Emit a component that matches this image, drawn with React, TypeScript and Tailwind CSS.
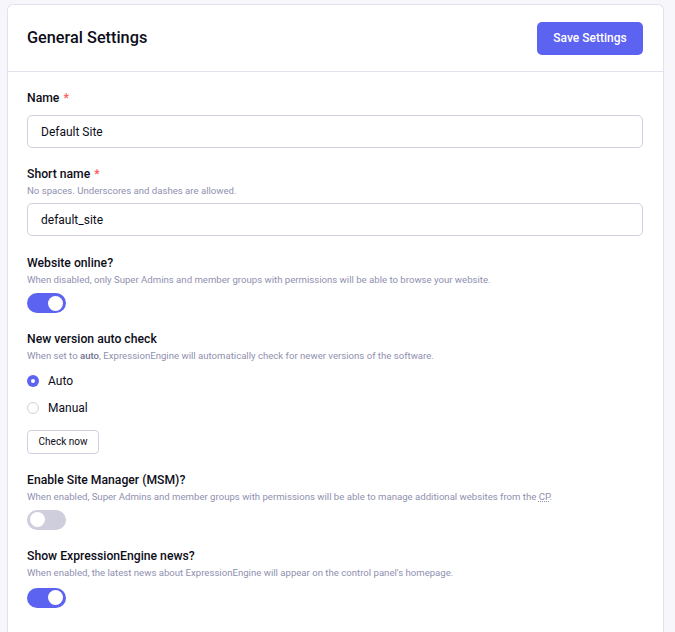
import { useState } from 'react';

function Toggle({ on, onChange }: { on: boolean; onChange: () => void }) {
  return (
    <button
      type="button"
      onClick={onChange}
      className={`flex h-[20px] w-[39px] items-center rounded-full px-[3px] ${
        on ? 'justify-end bg-[#5d63f1]' : 'justify-start bg-[#cfcedc]'
      }`}
    >
      <span className="h-[15px] w-[15px] rounded-full bg-white" />
    </button>
  );
}

function Label({ children, required }: { children: React.ReactNode; required?: boolean }) {
  return (
    <div className="text-[12.2px] font-medium leading-[16px] text-[#0d0d19]">
      {children}
      {required && <span className="ml-1 text-[#fa5a5a]">*</span>}
    </div>
  );
}

function Desc({ children }: { children: React.ReactNode }) {
  return <p className="mt-[2px] text-[9.6px] leading-[14px] text-[#8f90b0]">{children}</p>;
}

function Radio({ checked, label, onClick }: { checked: boolean; label: string; onClick: () => void }) {
  return (
    <label className="flex cursor-pointer items-center gap-[9px] leading-[18px]" onClick={onClick}>
      <span
        className={`flex h-[12px] w-[12px] items-center justify-center rounded-full ${
          checked ? 'bg-[#5d63f1]' : 'border border-[#cfd0dc] bg-white'
        }`}
      >
        {checked && <span className="h-[4px] w-[4px] rounded-full bg-white" />}
      </span>
      <span className="text-[12px] text-[#0d0d19]">{label}</span>
    </label>
  );
}

export default function App() {
  const [online, setOnline] = useState(true);
  const [msm, setMsm] = useState(false);
  const [news, setNews] = useState(true);
  const [check, setCheck] = useState<'auto' | 'manual'>('auto');

  return (
    <div className="min-h-[632px] bg-[#f6f6fb] pl-[7px] pr-[11px] pt-[4px] font-['Roboto',sans-serif]">
      <div className="rounded-t-[6px] border border-b-0 border-[#e1e1ef] bg-white pb-[24px]">
        <div className="flex h-[67px] items-center justify-between border-b border-[#e1e1ef] pl-[19px] pr-[20px]">
          <h1 className="text-[16.3px] font-medium text-[#0d0d19]">General Settings</h1>
          <button className="h-[33px] w-[106px] rounded-[5px] bg-[#5d63f1] text-[12px] font-medium text-white">
            Save Settings
          </button>
        </div>

        <div className="flex flex-col pl-[19px] pr-[20px] pt-[18px]">
          <Label required>Name</Label>
          <input
            defaultValue="Default Site"
            className="mt-[9px] h-[33px] rounded-[5px] border border-[#cfd0e0] px-[13px] text-[12px] text-[#0d0d19] outline-none"
          />

          <div className="mt-[18px]">
            <Label required>Short name</Label>
            <Desc>No spaces. Underscores and dashes are allowed.</Desc>
          </div>
          <input
            defaultValue="default_site"
            className="mt-[5px] h-[33px] rounded-[5px] border border-[#cfd0e0] px-[13px] text-[12px] text-[#0d0d19] outline-none"
          />

          <div className="mt-[19px]">
            <Label>Website online?</Label>
            <Desc>When disabled, only Super Admins and member groups with permissions will be able to browse your website.</Desc>
          </div>
          <div className="mt-[6px]">
            <Toggle on={online} onChange={() => setOnline(!online)} />
          </div>

          <div className="mt-[18px]">
            <Label>New version auto check</Label>
            <Desc>
              When set to <b className="font-medium text-[#6f7090]">auto</b>, ExpressionEngine will automatically check for newer versions of the software.
            </Desc>
          </div>
          <div className="mt-[9px] flex flex-col gap-[9px]">
            <Radio checked={check === 'auto'} label="Auto" onClick={() => setCheck('auto')} />
            <Radio checked={check === 'manual'} label="Manual" onClick={() => setCheck('manual')} />
          </div>
          <div className="mt-[11px]">
            <button className="h-[24px] w-[72px] rounded-[4px] border border-[#cfd0e0] bg-white text-[10px] text-[#0d0d19]">
              Check now
            </button>
          </div>

          <div className="mt-[18px]">
            <Label>Enable Site Manager (MSM)?</Label>
            <Desc>
              When enabled, Super Admins and member groups with permissions will be able to manage additional websites from the{' '}
              <abbr title="Control Panel" className="underline decoration-dotted">CP</abbr>.
            </Desc>
          </div>
          <div className="mt-[6px]">
            <Toggle on={msm} onChange={() => setMsm(!msm)} />
          </div>

          <div className="mt-[18px]">
            <Label>Show ExpressionEngine news?</Label>
            <Desc>When enabled, the latest news about ExpressionEngine will appear on the control panel's homepage.</Desc>
          </div>
          <div className="mt-[8px]">
            <Toggle on={news} onChange={() => setNews(!news)} />
          </div>
        </div>
      </div>
    </div>
  );
}
